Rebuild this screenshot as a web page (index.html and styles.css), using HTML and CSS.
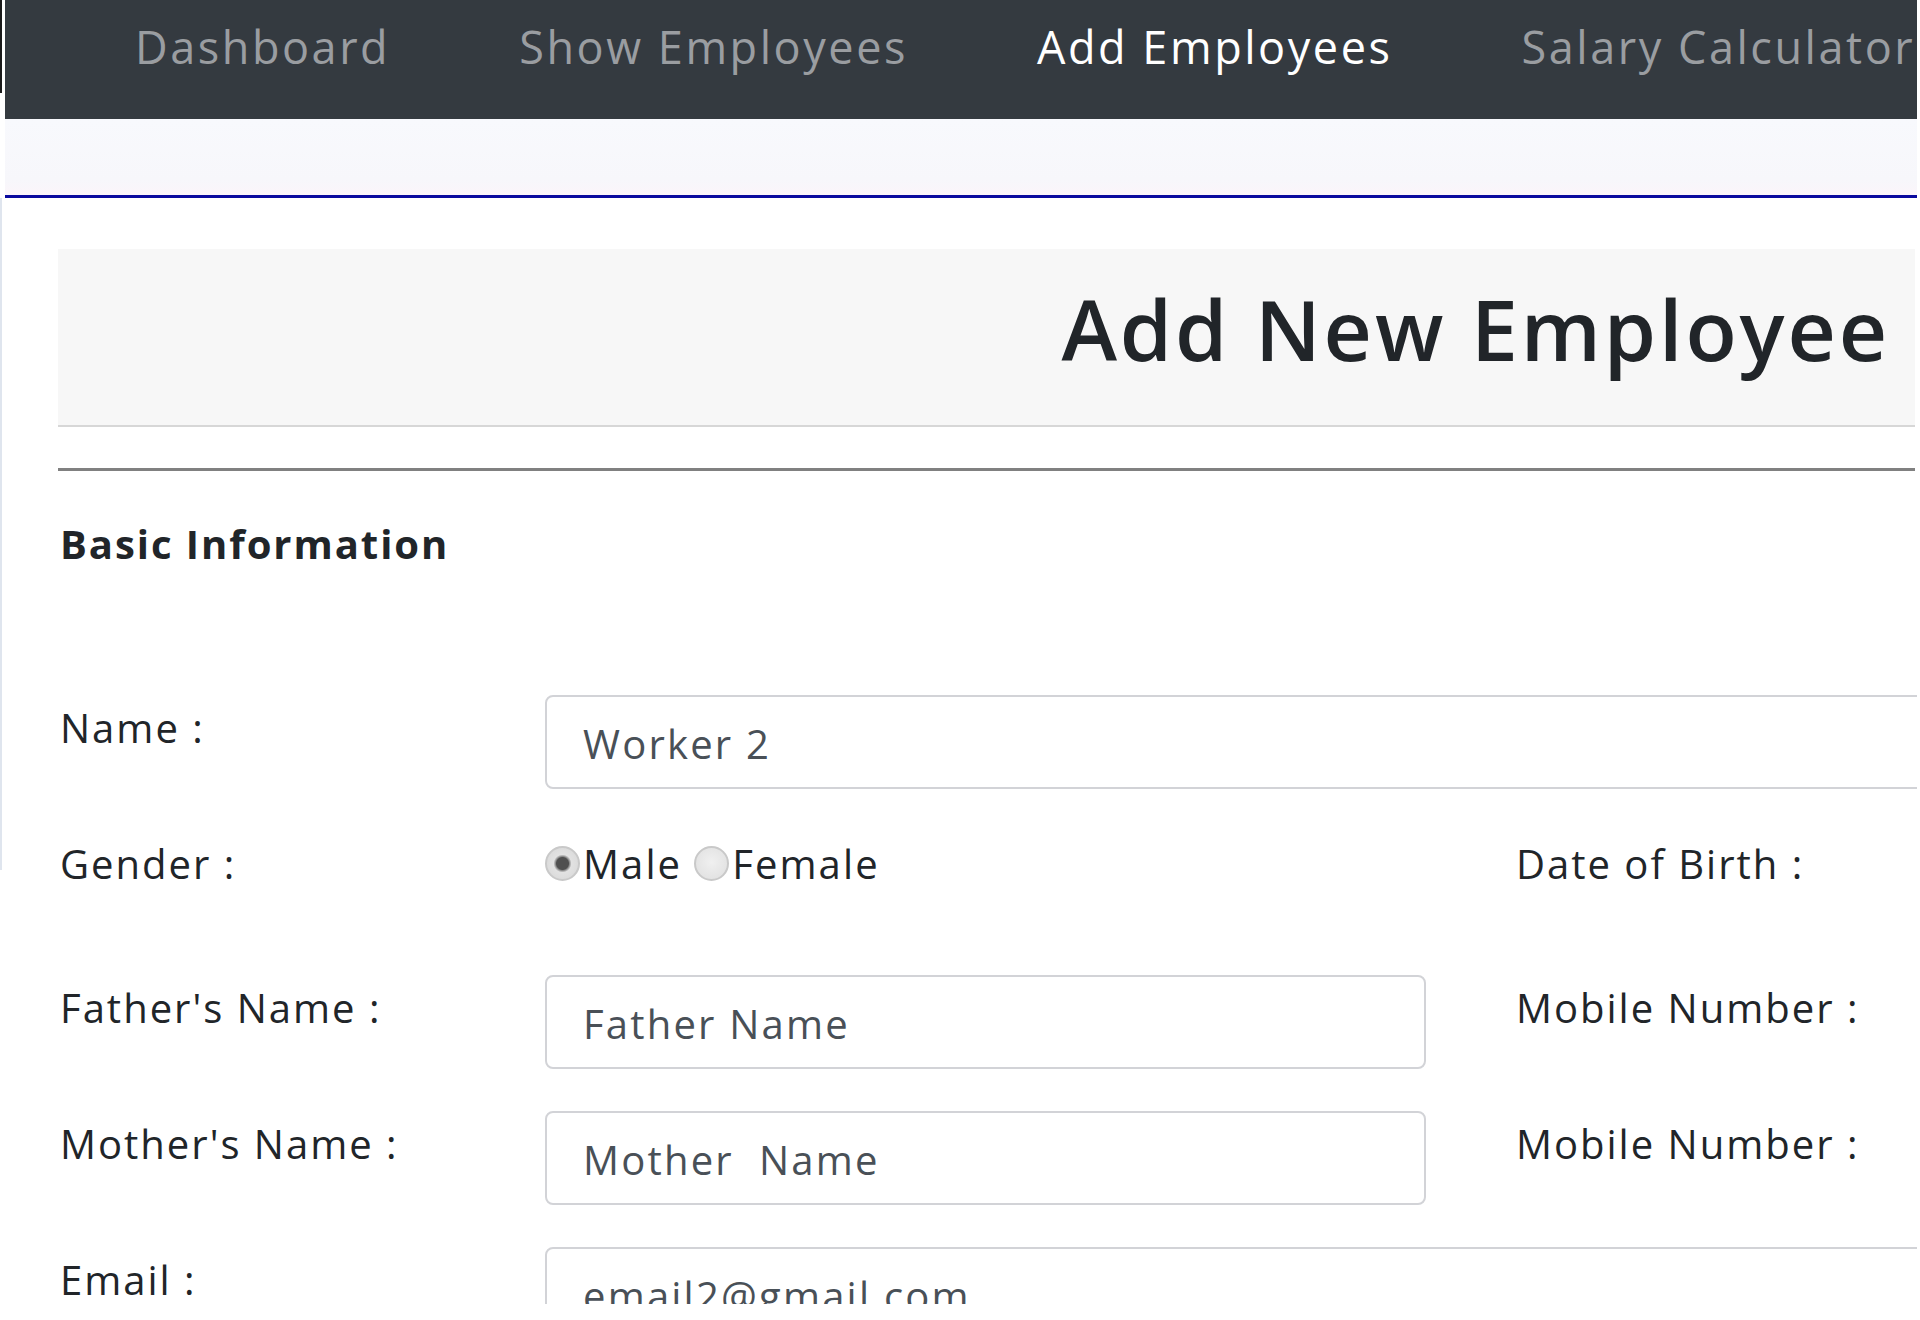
FILE: index.html
```html
<!DOCTYPE html>
<html lang="en">
<head>
<meta charset="utf-8">
<title>Add New Employee</title>
<link rel="stylesheet" href="styles.css">
</head>
<body>
<div class="shell">
  <div class="gutter">
    <div class="edge-dark"></div>
    <div class="edge-light"></div>
  </div>
  <div class="page">
    <nav class="topnav">
      <a class="nav-link" href="#">Dashboard</a>
      <a class="nav-link" href="#">Show Employees</a>
      <a class="nav-link active" href="#">Add Employees</a>
      <a class="nav-link" href="#">Salary Calculator</a>
    </nav>
    <div class="subbar"></div>
    <main class="content">
      <div class="card-head">
        <h1 class="title">Add New Employee</h1>
      </div>
      <hr class="divider">
      <h2 class="section-title">Basic Information</h2>
      <form class="emp-form">
        <div class="row">
          <label class="lbl">Name :</label>
          <input class="field field-wide" type="text" value="Worker 2">
        </div>
        <div class="row row-gender">
          <span class="lbl">Gender :</span>
          <div class="radios">
            <label class="radio-opt"><input class="radio" type="radio" name="g" checked>Male</label>
            <label class="radio-opt"><input class="radio" type="radio" name="g">Female</label>
          </div>
          <span class="lbl lbl-right">Date of Birth :</span>
        </div>
        <div class="row">
          <label class="lbl">Father's Name :</label>
          <input class="field" type="text" placeholder="Father Name">
          <span class="lbl lbl-right">Mobile Number :</span>
        </div>
        <div class="row">
          <label class="lbl">Mother's Name :</label>
          <input class="field" type="text" placeholder="Mother  Name">
          <span class="lbl lbl-right">Mobile Number :</span>
        </div>
        <div class="row">
          <label class="lbl">Email :</label>
          <input class="field field-wide" type="text" value="email2@gmail.com">
        </div>
      </form>
    </main>
  </div>
</div>
</body>
</html>
```
FILE: styles.css
```css
html, body {
  margin: 0;
  padding: 0;
  background: #ffffff;
}

body {
  font-family: "Open Sans", "Noto Sans", sans-serif;
  color: #212529;
  overflow: hidden;
}

.shell {
  display: flex;
  height: 1304px;
  overflow: hidden;
}

.gutter {
  flex: 0 0 5px;
  display: flex;
  flex-direction: column;
}

.edge-dark {
  width: 2px;
  height: 93px;
  background: #1a1a1a;
}

.edge-light {
  width: 2px;
  height: 672px;
  margin-top: 105px;
  background: #dfe5ee;
}

.page {
  flex: 0 0 1912px;
  width: 1912px;
  height: 1304px;
  overflow: hidden;
}

/* top navigation */
.topnav {
  display: flex;
  gap: 129px;
  height: 119px;
  box-sizing: border-box;
  padding: 13px 0 0 130px;
  background: #343a40;
}

.nav-link {
  font-size: 45px;
  line-height: 1.5;
  letter-spacing: 2.55px;
  color: #9a9da1;
  text-decoration: none;
  white-space: nowrap;
}

.nav-link.active {
  color: #ffffff;
}

.subbar {
  height: 76px;
  background: linear-gradient(#f8f9fd, #f7f7fb 80%, #fbf5fa);
  border-bottom: 3px solid #0a0a9e;
}

/* main content */
.content {
  padding: 51px 2px 0 53px;
}

.card-head {
  background: #f7f7f7;
  border-bottom: 2px solid #d7d7d7;
  padding: 30px 25px 45px 0;
  text-align: right;
}

.title {
  margin: 0;
  font-size: 84px;
  line-height: 1.2;
  font-weight: 600;
  letter-spacing: 2.9px;
  color: #212529;
  white-space: nowrap;
}

.divider {
  margin: 41px 0 0 0;
  border: 0;
  height: 3px;
  background: #808080;
}

.section-title {
  margin: 43px 0 0 2px;
  font-size: 40px;
  line-height: 1.5;
  font-weight: 700;
  letter-spacing: 1.95px;
  color: #212529;
}

/* form */
.emp-form {
  display: flex;
  flex-direction: column;
  gap: 42px;
  margin-top: 121px;
}

.row {
  display: grid;
  grid-template-columns: 487px 881px 1fr;
  align-items: start;
}

.row-gender {
  min-height: 102px;
}

.lbl {
  font-size: 40px;
  line-height: 1.5;
  letter-spacing: 2px;
  color: #212529;
  white-space: nowrap;
  padding-top: 3px;
}

.row > .lbl:first-child {
  padding-left: 2px;
}

.lbl-right {
  padding-left: 90px;
}

.field {
  box-sizing: border-box;
  width: 881px;
  height: 94px;
  padding: 3px 36px 0 36px;
  border: 2px solid #d2d3d7;
  border-radius: 8px;
  background: #ffffff;
  font-family: inherit;
  font-size: 40px;
  letter-spacing: 2.2px;
  color: #495057;
  outline: none;
}

.field::placeholder {
  color: #495057;
  opacity: 1;
}

.field-wide {
  width: 1500px;
  grid-column: 2 / 4;
}

.radios {
  display: flex;
  align-items: center;
  height: 66px;
  font-size: 40px;
  letter-spacing: 2.1px;
  color: #212529;
}

.radio-opt {
  display: flex;
  align-items: center;
  margin-right: 12px;
}

.radio {
  appearance: none;
  -webkit-appearance: none;
  width: 35px;
  height: 35px;
  margin: 0 3px 0 0;
  border-radius: 50%;
  box-sizing: border-box;
  border: 2px solid #c9c9c9;
  background: radial-gradient(circle at 50% 45%, #f0f0f0 0%, #dedede 100%);
}

.radio:checked {
  background: radial-gradient(circle, #505050 0 6px, #8a8a8a 7px, #e2e2e2 9px, #d6d6d6 100%);
}
```
